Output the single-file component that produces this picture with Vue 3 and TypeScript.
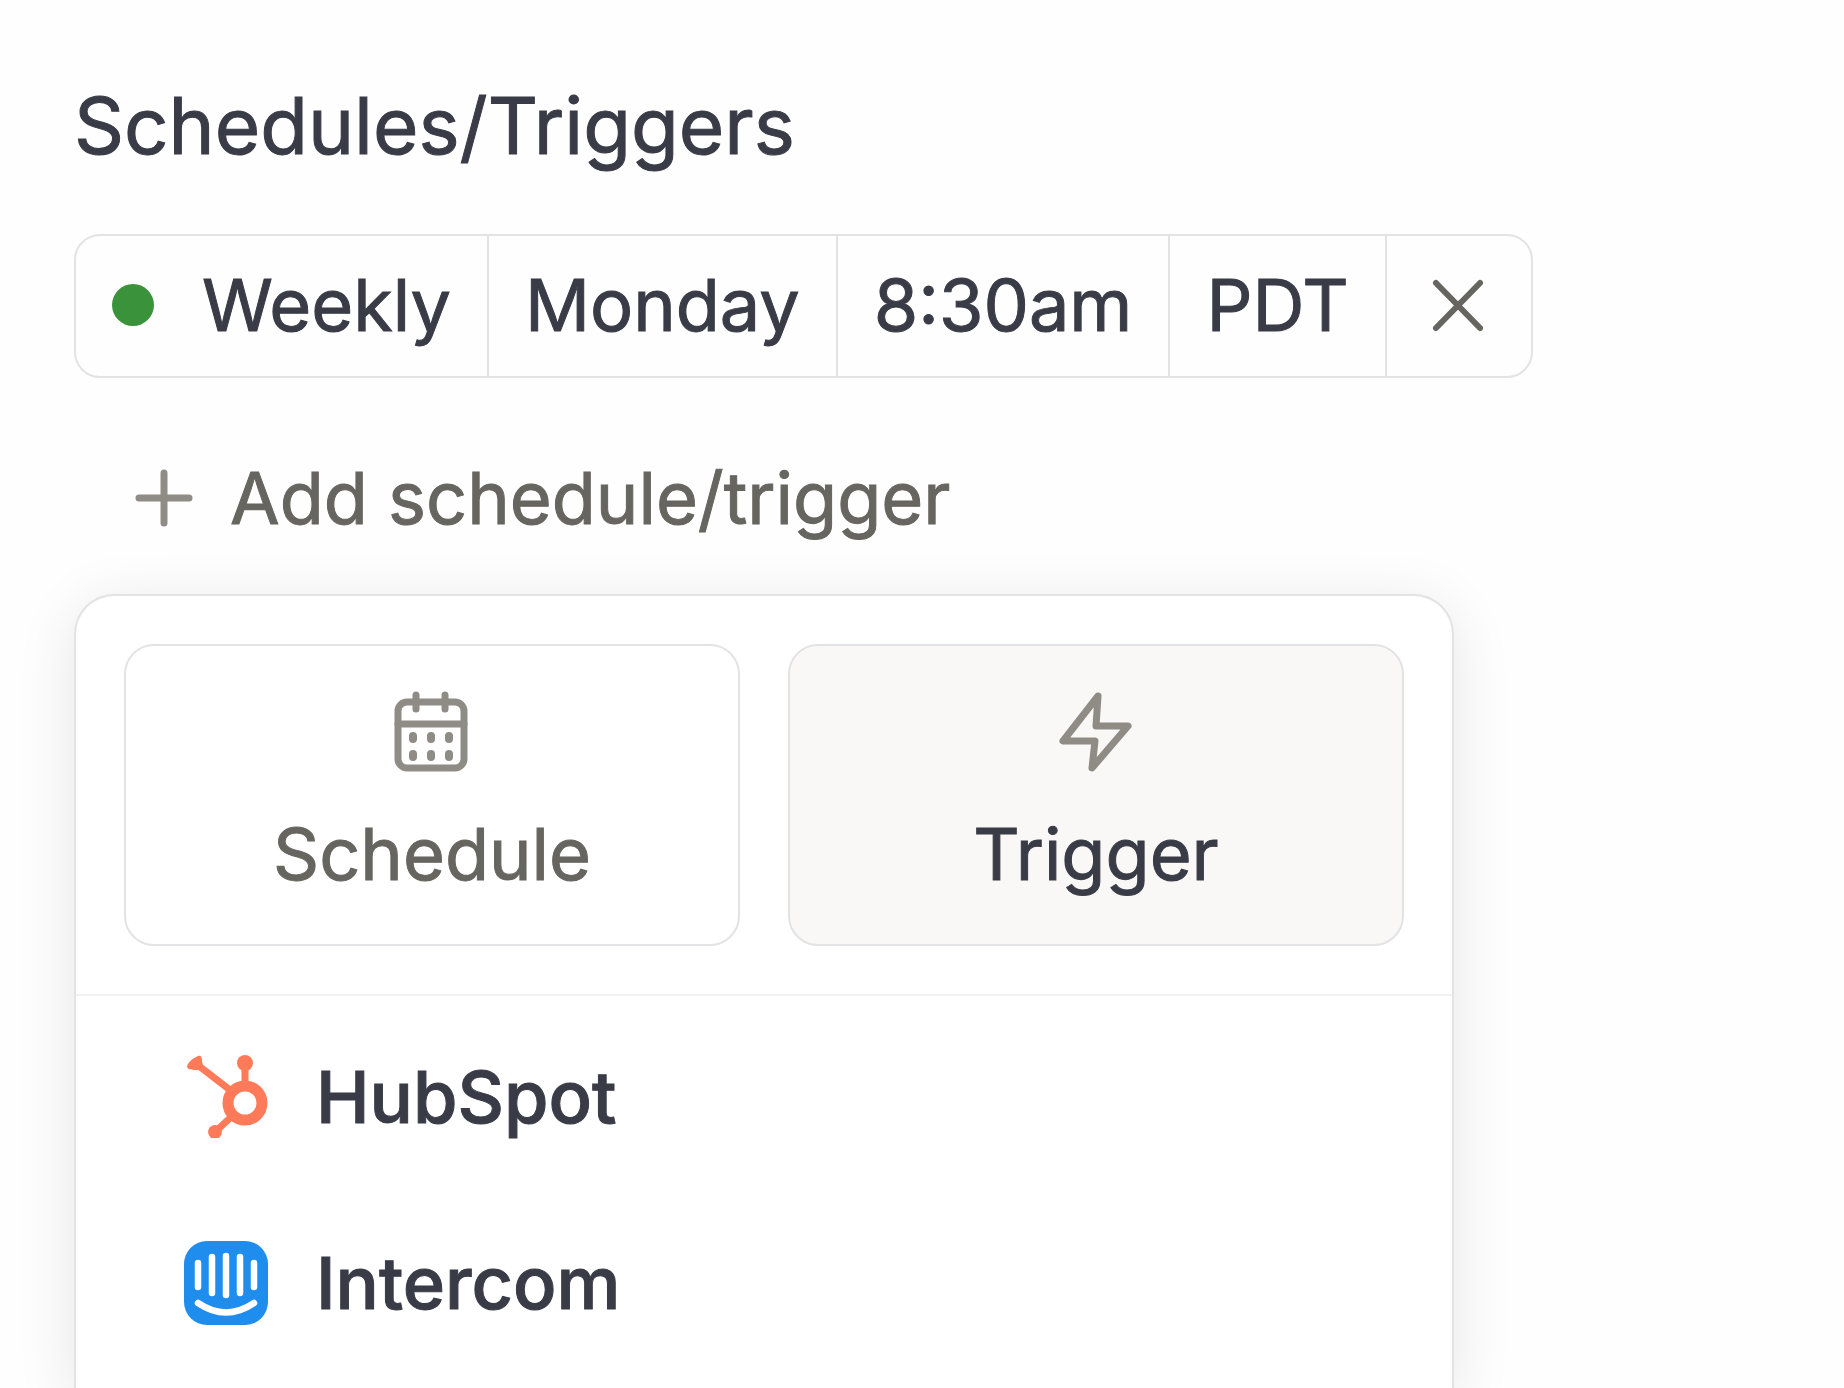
<script setup lang="ts">
import { ref } from 'vue'

type Mode = 'schedule' | 'trigger'

const mode = ref<Mode>('trigger')
const scheduleParts = ['Monday', '8:30am', 'PDT']
</script>

<template>
  <main class="page">
    <h1 class="title">Schedules/Triggers</h1>

    <div class="schedule" role="group" aria-label="Schedule">
      <button type="button" class="cell">
        <span class="dot"></span>
        <span>Weekly</span>
      </button>
      <button v-for="part in scheduleParts" :key="part" type="button" class="cell">{{ part }}</button>
      <button type="button" class="cell remove" aria-label="Remove schedule">
        <svg width="56" height="56" viewBox="0 0 56 56" fill="none" stroke="currentColor" stroke-width="6" stroke-linecap="round">
          <path d="M5 5L49 50M49 5L5 50" />
        </svg>
      </button>
    </div>

    <button type="button" class="add">
      <svg width="60" height="60" viewBox="0 0 60 60" fill="none" stroke="currentColor" stroke-width="7" stroke-linecap="round">
        <path d="M30 5V55M5 30H55" />
      </svg>
      <span>Add schedule/trigger</span>
    </button>

    <section class="panel">
      <div class="modes">
        <button type="button" class="mode" :class="{ active: mode === 'schedule' }" @click="mode = 'schedule'">
          <svg width="84" height="84" viewBox="0 0 84 84" fill="none" stroke="currentColor" stroke-width="7" stroke-linecap="round">
            <rect x="8" y="12" width="66" height="66" rx="9" />
            <path d="M8 34H74M26 5V19M55 5V19" />
            <path d="M23 46V49M41 46V49M59 46V49M23 64V67M41 64V67M59 64V67" stroke-width="8" />
          </svg>
          <span>Schedule</span>
        </button>
        <button type="button" class="mode" :class="{ active: mode === 'trigger' }" @click="mode = 'trigger'">
          <svg width="84" height="84" viewBox="0 0 84 84" fill="none" stroke="currentColor" stroke-width="7" stroke-linejoin="round">
            <path d="M44 6L9 51H41L38 78L74 36H42Z" />
          </svg>
          <span>Trigger</span>
        </button>
      </div>

      <ul class="sources">
        <li>
          <button type="button" class="source">
            <svg width="84" height="84" viewBox="0 0 84 84">
              <g fill="none" stroke="#ff7a59">
                <circle cx="61" cy="48" r="17" stroke-width="11" />
                <path d="M61 8V30M15 11L46 35M46 63L31 77" stroke-width="7" />
              </g>
              <g fill="#ff7a59">
                <circle cx="61" cy="8" r="8" />
                <path d="M24 77A7 7 0 1 1 38 77Q38 80 35 83H27Q24 80 24 77Z" />
                <path d="M14 1C17 0 18 2 18 6L19 10L14 15C9 15 4 15 3 12C3 8 9 3 14 1Z" />
              </g>
            </svg>
            <span>HubSpot</span>
          </button>
        </li>
        <li>
          <button type="button" class="source">
            <svg width="84" height="84" viewBox="0 0 84 84" fill="none" stroke="#fff" stroke-width="6.5" stroke-linecap="round">
              <rect width="84" height="84" rx="23" fill="#1f8ded" stroke="none" />
              <path d="M14 22V46M28 16V52M42 15V54M56 16V52M70 22V46" />
              <path d="M14 62Q42 81 70 62" />
            </svg>
            <span>Intercom</span>
          </button>
        </li>
      </ul>
    </section>
  </main>
</template>

<style>
body {
  margin: 0;
  background: #fefefe;
}
</style>

<style scoped>
.page {
  box-sizing: border-box;
  display: flex;
  flex-direction: column;
  align-items: flex-start;
  height: 100vh;
  padding: 76px 74px 0;
  overflow: hidden;
  color: #393c46;
  font-family: Inter, sans-serif;
  font-size: 72px;
  line-height: 88px;
  font-optical-sizing: none;
  -webkit-text-stroke: 1px currentColor;
}

button {
  margin: 0;
  padding: 0;
  border: 0;
  background: transparent;
  color: inherit;
  font: inherit;
  font-optical-sizing: none;
  cursor: pointer;
}

svg {
  flex: none;
  display: block;
}

.title {
  margin: 0;
  font-size: 78px;
  line-height: 100px;
  font-weight: 400;
}

.schedule {
  display: flex;
  flex: none;
  margin-top: 58px;
  border: 2px solid #e3e3e3;
  border-radius: 26px;
  overflow: hidden;
}

.cell {
  display: flex;
  align-items: center;
  height: 140px;
  padding: 0 36px 2px;
  border-right: 2px solid #e3e3e3;
  white-space: nowrap;
}

.cell:last-child {
  border-right: 0;
}

.dot {
  width: 42px;
  height: 42px;
  margin-right: 48px;
  border-radius: 50%;
  background: #3a933a;
}

.remove {
  padding: 0 44px;
  color: #66655f;
}

.add {
  display: flex;
  flex: none;
  align-items: center;
  gap: 36px;
  margin: 76px 0 52px 60px;
  color: #66655f;
  white-space: nowrap;
}

.add svg {
  color: #8e8c84;
}

.panel {
  box-sizing: border-box;
  flex: 1 0 auto;
  width: 100%;
  max-width: 1380px;
  border: 2px solid #e3e3e5;
  border-bottom: 0;
  border-radius: 40px 40px 0 0;
  background: #fff;
  box-shadow: 0 12px 60px rgba(0, 0, 0, 0.1);
}

.modes {
  display: grid;
  grid-template-columns: 1fr 1fr;
  gap: 48px;
  padding: 48px;
  border-bottom: 2px solid #f2f2f2;
}

.mode {
  display: flex;
  flex-direction: column;
  align-items: center;
  gap: 36px;
  padding: 44px 0 46px;
  border: 2px solid #e3e3e5;
  border-radius: 30px;
  color: #66655f;
}

.mode svg {
  color: #8e8c84;
}

.mode.active {
  background: #f9f8f7;
  color: #393c46;
}

.sources {
  display: flex;
  flex-direction: column;
  margin: 0;
  padding: 8px 0;
  list-style: none;
}

.source {
  display: flex;
  align-items: center;
  gap: 48px;
  width: 100%;
  height: 186px;
  padding: 0 108px;
  font-weight: 500;
}
</style>
